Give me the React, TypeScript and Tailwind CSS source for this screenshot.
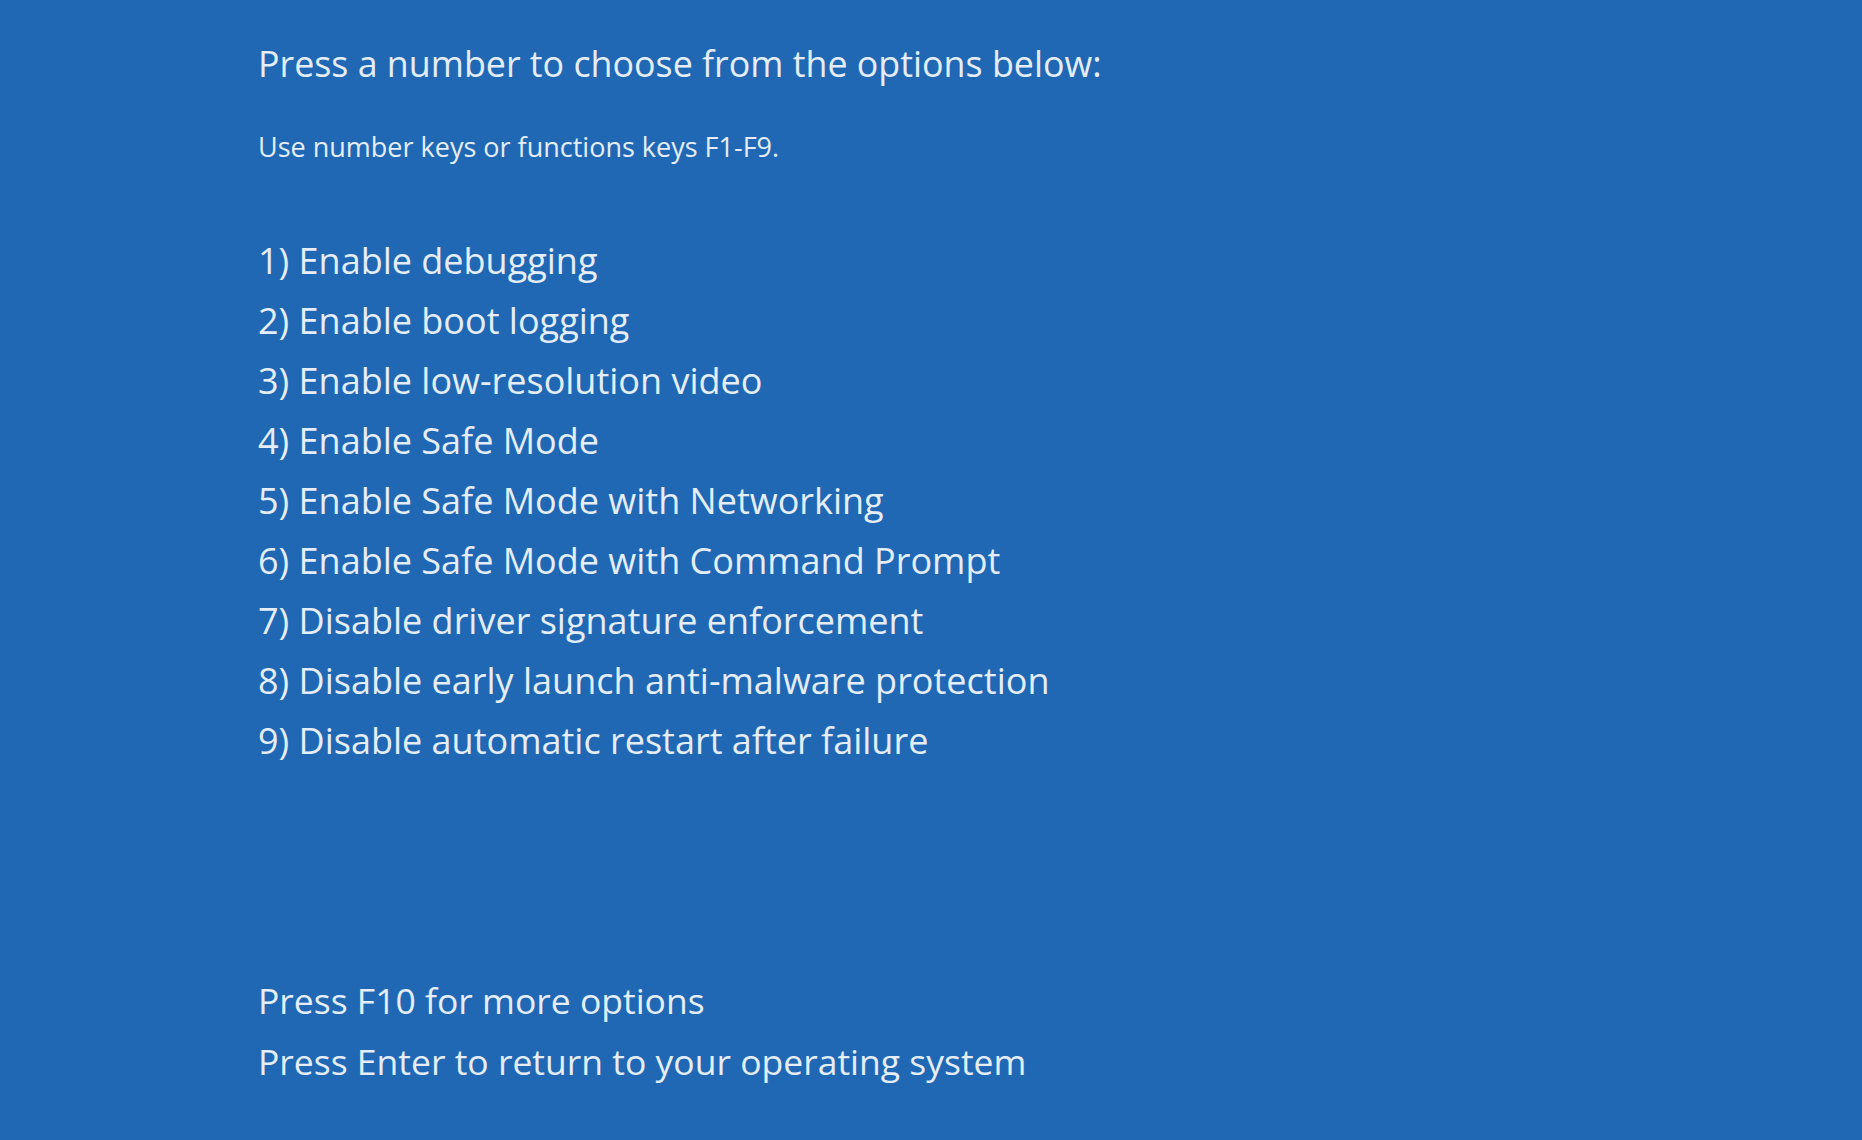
const options = [
  '1) Enable debugging',
  '2) Enable boot logging',
  '3) Enable low-resolution video',
  '4) Enable Safe Mode',
  '5) Enable Safe Mode with Networking',
  '6) Enable Safe Mode with Command Prompt',
  '7) Disable driver signature enforcement',
  '8) Disable early launch anti-malware protection',
  '9) Disable automatic restart after failure',
];

export default function App() {
  return (
    <div className="w-[1862px] h-[1140px] overflow-hidden bg-[#2068b4] text-[#e4edf8] font-['Open_Sans',sans-serif]">
      <div className="pl-[258px] flex flex-col">
        <h1 className="mt-[41px] text-[35.8px] leading-[44px] font-normal">
          Press a number to choose from the options below:
        </h1>
        <p className="mt-[47px] text-[27px] leading-[30px]">Use number keys or functions keys F1-F9.</p>
        <ul className="mt-[69px]">
          {options.map((o) => (
            <li key={o} className="text-[36px] leading-[60px]">
              {o}
            </li>
          ))}
        </ul>
        <div className="mt-[199px] flex flex-col">
          <p className="text-[35.5px] leading-[61px]">Press F10 for more options</p>
          <p className="text-[35.5px] leading-[61px]">Press Enter to return to your operating system</p>
        </div>
      </div>
    </div>
  );
}
